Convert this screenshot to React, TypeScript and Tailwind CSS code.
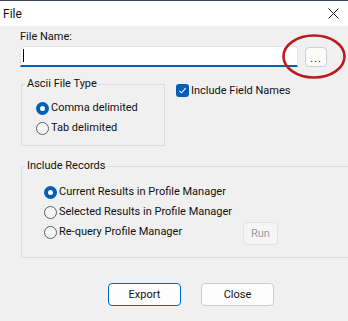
import type { ReactNode } from 'react'

const FONT = { fontFamily: 'Roboto, "Noto Sans", sans-serif' }

function Radio({ checked, label }: { checked?: boolean; label: string }) {
  return (
    <div className="flex items-center h-[20px] gap-[2px]">
      {checked ? (
        <span className="w-[13px] h-[13px] rounded-full bg-[#005fb8] flex items-center justify-center shrink-0">
          <span className="w-[5px] h-[5px] rounded-full bg-white" />
        </span>
      ) : (
        <span className="w-[13px] h-[13px] rounded-full border border-[#5f5f5f] bg-[#f6f6f6] shrink-0" />
      )}
      <span className="whitespace-nowrap">{label}</span>
    </div>
  )
}

function GroupBox({ title, className, children }: { title: string; className: string; children: ReactNode }) {
  return (
    <div className={`relative border border-[#dcdcdc] ${className}`}>
      <span className="absolute -top-[9px] left-[4px] px-px bg-[#f0f0f0] leading-[16px] whitespace-nowrap">{title}</span>
      {children}
    </div>
  )
}

export default function App() {
  return (
    <div
      style={FONT}
      className="w-[348px] h-[321px] relative overflow-hidden bg-[#f0f0f0] text-[11px] leading-[16px] text-[#111]"
    >
      {/* title bar */}
      <div className="h-[26px] bg-white border-t border-[#3c4660] flex items-center justify-between pl-[3px] pr-[8px]">
        <span className="text-[12px]">File</span>
        <svg width="11" height="11" viewBox="0 0 11 11" className="mr-px">
          <path d="M0.5 0.5L10.5 10.5M10.5 0.5L0.5 10.5" stroke="#222" strokeWidth="1" />
        </svg>
      </div>

      <div className="pl-[20px]">
        <div className="mt-[3px] h-[16px]">File Name:</div>

        {/* file name row */}
        <div className="flex items-start mt-px">
          <div className="w-[278px] h-[21px] bg-white border border-[#e3e3e3] border-b-2 border-b-[#005fb8] rounded-t-[3px] relative">
            <span className="absolute left-[2px] top-[2px] w-px h-[13px] bg-black" />
          </div>
          <button className="ml-[7px] mt-px w-[22px] h-[20px] rounded-[4px] border border-[#d0d0d0] bg-[#fbfbfb] flex items-end justify-center pb-[2px] leading-[10px] tracking-[1px]">
            ...
          </button>
        </div>

        {/* ascii type + include field names */}
        <div className="flex items-start mt-[17px]">
          <GroupBox title="Ascii File Type" className="ml-px w-[144px] h-[62px] pl-[14px] pt-[13px]">
            <Radio checked label="Comma delimited" />
            <Radio label="Tab delimited" />
          </GroupBox>
          <div className="ml-[11px] flex items-center gap-[2px] h-[13px]">
            <span className="w-[13px] h-[13px] rounded-[3px] bg-[#005fb8] flex items-center justify-center">
              <svg width="9" height="9" viewBox="0 0 9 9">
                <path d="M1.5 4.8L3.6 6.8L7.6 2.2" stroke="white" strokeWidth="1.1" fill="none" />
              </svg>
            </span>
            <span className="whitespace-nowrap">Include Field Names</span>
          </div>
        </div>

        {/* include records */}
        <GroupBox title="Include Records" className="ml-px mt-[20px] w-[340px] h-[92px] pl-[22px] pt-[15px]">
          <Radio checked label="Current Results in Profile Manager" />
          <Radio label="Selected Results in Profile Manager" />
          <div className="flex items-center h-[20px]">
            <div className="w-[199px]">
              <Radio label="Re-query Profile Manager" />
            </div>
            <button
              disabled
              className="w-[35px] h-[23px] mt-[3px] rounded-[4px] border border-[#e2e2e2] bg-[#f5f5f5] text-[#9d9d9d]"
            >
              Run
            </button>
          </div>
        </GroupBox>

        {/* actions */}
        <div className="flex mt-[25px] ml-[88px] gap-[20px]">
          <button className="w-[73px] h-[23px] rounded-[4px] border border-[#0067c0] bg-[#fdfdfd]">Export</button>
          <button className="w-[73px] h-[23px] rounded-[4px] border border-[#cccccc] bg-[#fdfdfd]">Close</button>
        </div>
      </div>

      {/* red annotation ring */}
      <svg className="absolute left-[280px] top-[32px]" width="68" height="50" viewBox="0 0 68 50">
        <ellipse cx="34" cy="24.5" rx="30.5" ry="21" fill="none" stroke="#bb1a1f" strokeWidth="2.6" />
      </svg>
    </div>
  )
}
